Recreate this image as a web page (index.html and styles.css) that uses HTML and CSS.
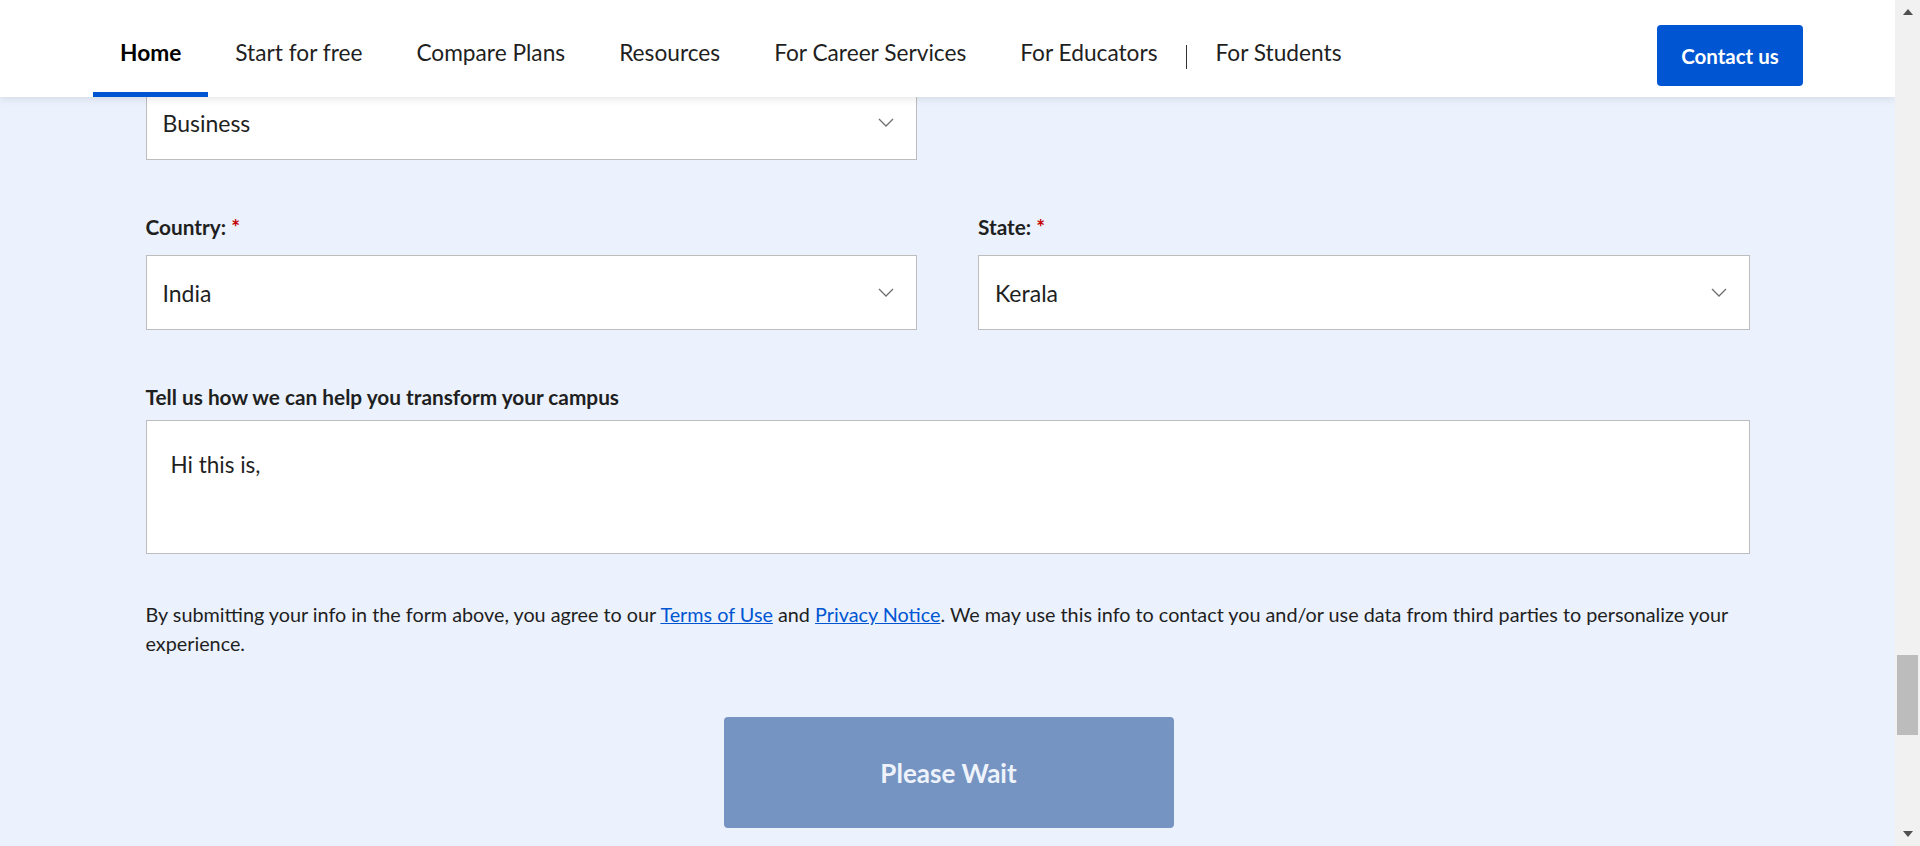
FILE: index.html
```html
<!DOCTYPE html>
<html lang="en">
<head>
<meta charset="utf-8">
<title>Contact form</title>
<link rel="stylesheet" href="styles.css">
</head>
<body>
<div class="window">
  <div class="page">
    <header class="topnav">
      <nav class="menu">
        <a class="menu-item active" href="#">Home</a>
        <a class="menu-item" href="#">Start for free</a>
        <a class="menu-item" href="#">Compare Plans</a>
        <a class="menu-item" href="#">Resources</a>
        <a class="menu-item" href="#">For Career Services</a>
        <a class="menu-item" href="#">For Educators</a>
        <span class="menu-sep"></span>
        <a class="menu-item students" href="#">For Students</a>
      </nav>
      <a class="contact-btn" href="#">Contact us</a>
    </header>

    <main class="form">
      <div class="row">
        <div class="field">
          <div class="select"><span>Business</span>
            <svg class="chev" width="16" height="9" viewBox="0 0 16 9"><path d="M1 1 L8 8 L15 1" fill="none" stroke="#6f6f6f" stroke-width="1.3"/></svg>
          </div>
        </div>
        <div class="field"></div>
      </div>

      <div class="row row-gap">
        <div class="field">
          <label class="label">Country: <span class="req">*</span></label>
          <div class="select"><span>India</span>
            <svg class="chev" width="16" height="9" viewBox="0 0 16 9"><path d="M1 1 L8 8 L15 1" fill="none" stroke="#6f6f6f" stroke-width="1.3"/></svg>
          </div>
        </div>
        <div class="field">
          <label class="label">State: <span class="req">*</span></label>
          <div class="select"><span>Kerala</span>
            <svg class="chev" width="16" height="9" viewBox="0 0 16 9"><path d="M1 1 L8 8 L15 1" fill="none" stroke="#6f6f6f" stroke-width="1.3"/></svg>
          </div>
        </div>
      </div>

      <div class="field message">
        <label class="label label-tight">Tell us how we can help you transform your campus</label>
        <div class="textarea">Hi this is,</div>
      </div>

      <p class="consent"><span>By submitting your info in the form above, you agree to our</span> <a href="#">Terms of Use</a> <span>and</span> <a href="#">Privacy Notice</a><span>. We may use this info to contact you and/or use data from third parties to personalize your</span> <span>experience.</span></p>

      <div class="actions">
        <button class="wait-btn" type="button">Please Wait</button>
      </div>
    </main>
  </div>

  <div class="scrollbar">
    <span class="arrow up"></span>
    <div class="track"><div class="thumb"></div></div>
    <span class="arrow down"></span>
  </div>
</div>
</body>
</html>
```

FILE: styles.css
```css
* { box-sizing: border-box; }

html, body {
  margin: 0;
  height: 100%;
  overflow: hidden;
}

body {
  font-family: "Lato", "Roboto", "Liberation Sans", sans-serif;
  color: #1f1f1f;
  background: #ebf2fd;
}

.window {
  display: flex;
  height: 846px;
}

.page {
  position: relative;
  flex: 1;
  overflow: hidden;
  background: #ebf2fd;
}

/* ---------- top navigation (sticky over content) ---------- */
.topnav {
  position: absolute;
  top: 0;
  left: 0;
  right: 0;
  z-index: 5;
  height: 97px;
  background: #fff;
  box-shadow: 0 2px 8px rgba(0, 0, 0, 0.10);
  display: flex;
  align-items: stretch;
  justify-content: space-between;
  padding: 0 92px 0 93px;
}

.menu {
  display: flex;
  align-items: stretch;
}

.menu-item {
  display: flex;
  align-items: center;
  padding: 13px 27px 0;
  border-bottom: 5px solid transparent;
  font-size: 22.7px;
  color: #1f1f1f;
  text-decoration: none;
  white-space: nowrap;
}

.menu-item.active {
  font-weight: 700;
  color: #000;
  border-bottom-color: #0056d2;
}

.menu-item.students { padding-left: 28px; }

.menu-sep {
  width: 1px;
  height: 24px;
  background: #333;
  align-self: center;
  margin-top: 17px;
  margin-left: 2px;
}

.contact-btn {
  align-self: center;
  margin-top: 14px;
  width: 146px;
  height: 61px;
  border-radius: 4px;
  background: #0056d2;
  color: #fff;
  font-weight: 700;
  font-size: 20.5px;
  text-decoration: none;
  display: flex;
  align-items: center;
  justify-content: center;
}

/* ---------- form ---------- */
.form {
  width: 1604px;
  margin: 0 auto;
  padding-top: 85px;
}

.row {
  display: grid;
  grid-template-columns: 1fr 1fr;
  column-gap: 61px;
}

.row-gap { margin-top: 55px; }

.field {
  display: flex;
  flex-direction: column;
}

.label {
  font-size: 20.8px;
  font-weight: 700;
  line-height: 24px;
  color: #1f1f1f;
  margin-bottom: 16px;
}

.label-tight { margin-bottom: 11px; }

.req { color: #c40000; }

.select {
  height: 75px;
  background: #fff;
  border: 1px solid #bdbdbd;
  display: flex;
  align-items: center;
  justify-content: space-between;
  padding: 0 22px 0 16px;
  font-size: 23px;
  color: #1f1f1f;
}

.chev { flex: none; }

.message { margin-top: 55px; }

.textarea {
  height: 134px;
  background: #fff;
  border: 1px solid #bdbdbd;
  padding: 30px 24px 0;
  font-size: 22.5px;
  line-height: 28px;
  color: #1f1f1f;
}

.consent {
  margin: 46px 0 0;
  font-size: 19.8px;
  line-height: 29px;
  color: #1f1f1f;
}

.consent a {
  color: #0056d2;
  text-decoration: underline;
}

.actions {
  display: flex;
  justify-content: center;
  margin-top: 59px;
  padding-left: 2px;
}

.wait-btn {
  width: 450px;
  height: 111px;
  border: none;
  border-radius: 4px;
  background: #7594c2;
  color: #eef3fb;
  font-family: inherit;
  font-size: 26px;
  font-weight: 700;
}

/* ---------- browser scrollbar ---------- */
.scrollbar {
  width: 25px;
  flex: none;
  background: #f1f1f1;
  display: flex;
  flex-direction: column;
  align-items: center;
}

.arrow {
  width: 0;
  height: 0;
  border-left: 5px solid transparent;
  border-right: 5px solid transparent;
  margin: 9px 0;
}

.arrow.up { border-bottom: 6px solid #505050; }
.arrow.down { border-top: 6px solid #505050; }

.track {
  flex: 1;
  width: 100%;
  padding: 631px 2px 0;
}

.thumb {
  height: 80px;
  background: #bcbcbc;
}
```
